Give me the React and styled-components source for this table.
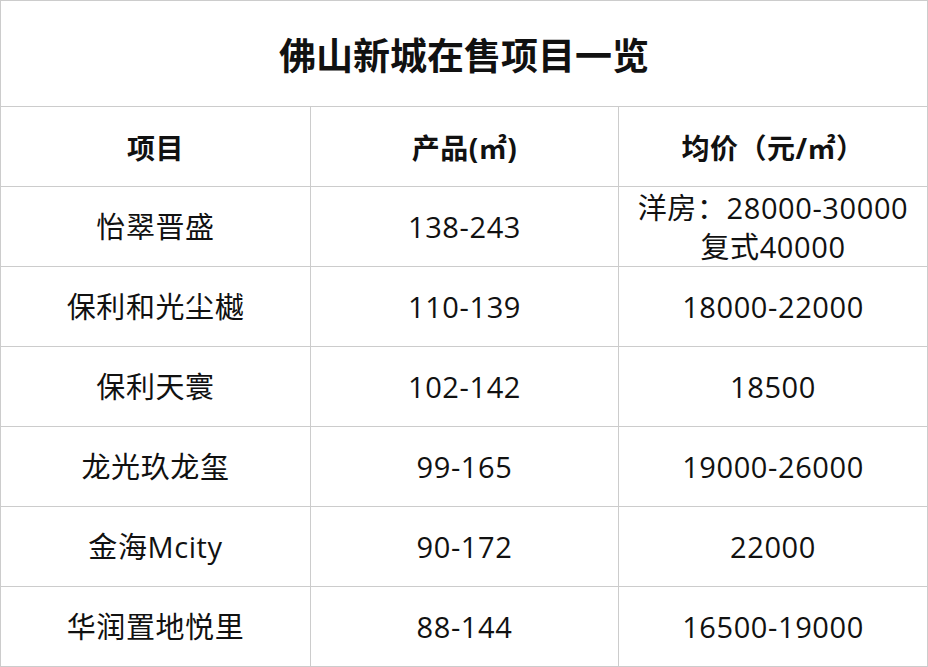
import React from 'react';
import styled, { createGlobalStyle } from 'styled-components';

const GlobalStyle = createGlobalStyle`
  html, body {
    margin: 0;
    padding: 0;
    background: #ffffff;
  }
  body {
    font-family: "Open Sans", "Noto Sans CJK SC", sans-serif;
    color: #111111;
  }
`;

const Table = styled.table`
  width: 927px;
  border-collapse: collapse;
  table-layout: fixed;
`;

const TitleCell = styled.th`
  height: 105px;
  padding: 0;
  border: 1px solid #cccccc;
  font-family: "Noto Sans CJK SC", sans-serif;
  font-size: 37px;
  font-weight: 700;
  text-align: center;
  vertical-align: middle;
`;

const HeadCell = styled.th`
  height: 79px;
  padding: 0;
  border: 1px solid #cccccc;
  font-size: 28px;
  font-weight: 700;
  letter-spacing: 0.5px;
  text-align: center;
  vertical-align: middle;
`;

const Cell = styled.td`
  height: 79px;
  padding: 0;
  border: 1px solid #cccccc;
  font-size: 29px;
  font-weight: 400;
  letter-spacing: 0.6px;
  line-height: 39px;
  text-align: center;
  vertical-align: middle;
`;

const rows = [
  { name: '怡翠晋盛', area: '138-243', price: ['洋房：28000-30000', '复式40000'] },
  { name: '保利和光尘樾', area: '110-139', price: ['18000-22000'] },
  { name: '保利天寰', area: '102-142', price: ['18500'] },
  { name: '龙光玖龙玺', area: '99-165', price: ['19000-26000'] },
  { name: '金海Mcity', area: '90-172', price: ['22000'] },
  { name: '华润置地悦里', area: '88-144', price: ['16500-19000'] },
];

export default function App() {
  return (
    <>
      <GlobalStyle />
      <Table>
        <colgroup>
          <col style={{ width: 310 }} />
          <col style={{ width: 308 }} />
          <col style={{ width: 309 }} />
        </colgroup>
        <thead>
          <tr>
            <TitleCell colSpan={3}>佛山新城在售项目一览</TitleCell>
          </tr>
          <tr>
            <HeadCell>项目</HeadCell>
            <HeadCell>产品(㎡)</HeadCell>
            <HeadCell>均价（元/㎡）</HeadCell>
          </tr>
        </thead>
        <tbody>
          {rows.map((r) => (
            <tr key={r.name}>
              <Cell>{r.name}</Cell>
              <Cell>{r.area}</Cell>
              <Cell>
                {r.price.map((p, i) => (
                  <div key={i}>{p}</div>
                ))}
              </Cell>
            </tr>
          ))}
        </tbody>
      </Table>
    </>
  );
}
